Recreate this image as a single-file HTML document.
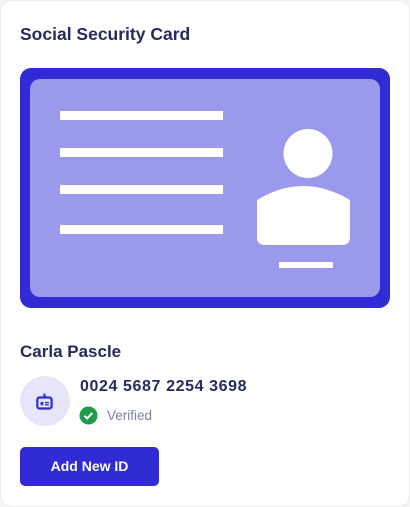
<!DOCTYPE html>
<html><head><style>
body{margin:0;width:410px;height:507px;background:#f4f4f6;font-family:"Liberation Sans",sans-serif;overflow:hidden;position:relative}
.card{position:absolute;left:0;top:0;width:408px;height:505px;background:#fff;border-radius:12px;border:1px solid #eee}
.t{position:absolute;color:#272a5c}
</style></head><body>
<div class="card"></div>
<div class="t" style="left:20px;top:24px;font-size:17.5px;font-weight:600;">Social Security Card</div>
<svg style="position:absolute;left:0;top:0" width="410" height="330">
<rect x="20" y="68" width="370" height="240" rx="11" fill="#312bd6"/>
<rect x="30" y="79" width="350" height="218" rx="10" fill="#9b99ec"/>
<rect x="60" y="111" width="163" height="9" fill="#fff"/>
<rect x="60" y="148" width="163" height="9" fill="#fff"/>
<rect x="60" y="185" width="163" height="9" fill="#fff"/>
<rect x="60" y="225" width="163" height="9" fill="#fff"/>
<circle cx="308" cy="153.5" r="24.5" fill="#fff"/>
<path d="M257 200 Q303 172 350 200 L350 237 Q350 245 342 245 L265 245 Q257 245 257 237 Z" fill="#fff"/>
<rect x="279" y="262" width="54" height="6" fill="#fff"/>
</svg>
<div class="t" style="left:20px;top:342px;font-size:17px;font-weight:600;">Carla Pascle</div>
<div style="position:absolute;left:20px;top:376px;width:50px;height:50px;border-radius:50%;background:#e6e6f8"></div>
<svg style="position:absolute;left:34px;top:392px" width="22" height="22" viewBox="0 0 20 20">
<rect x="3" y="5" width="13" height="10" rx="2" fill="none" stroke="#312bd6" stroke-width="2"/>
<rect x="8.5" y="1.5" width="2" height="4" fill="#312bd6"/>
<rect x="6" y="9" width="2.5" height="3" fill="#312bd6"/>
<rect x="10" y="9" width="3.5" height="1.2" fill="#312bd6"/>
<rect x="10" y="11" width="3.5" height="1.2" fill="#312bd6"/>
</svg>
<div class="t" style="left:80px;top:378px;font-size:16px;font-weight:700;letter-spacing:0.6px">0024 5687 2254 3698</div>
<svg style="position:absolute;left:79px;top:406px" width="19" height="19" viewBox="0 0 19 19">
<circle cx="9.5" cy="9.5" r="9" fill="#1f9d4d"/>
<path d="M5.5 9.8 L8.2 12.3 L13.3 7" fill="none" stroke="#fff" stroke-width="2"/>
</svg>
<div class="t" style="left:107px;top:408px;font-size:13.5px;color:#7b80a3;">Verified</div>
<div style="position:absolute;left:20px;top:447px;width:139px;height:39px;background:#312bd6;border-radius:5px;color:#fff;font-size:14px;font-weight:700;text-align:center;line-height:39px">Add New ID</div>
</body></html>
